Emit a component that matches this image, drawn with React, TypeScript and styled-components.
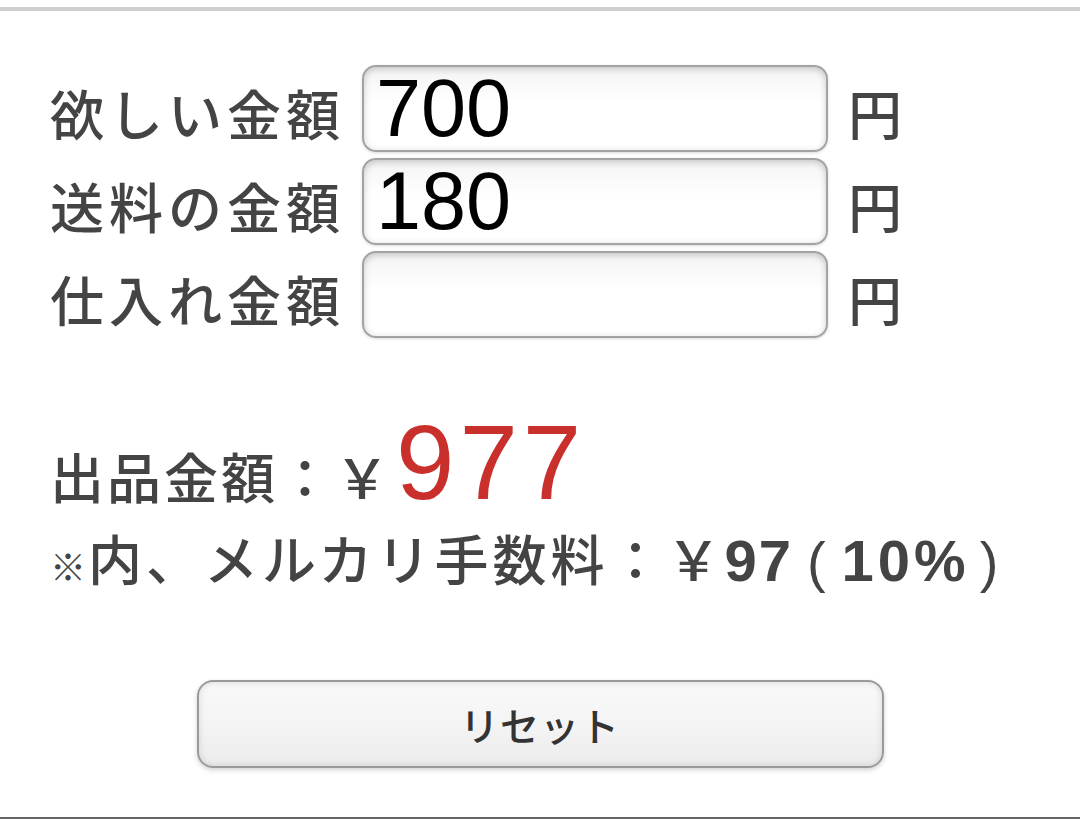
import React, { useState } from "react";
import styled, { createGlobalStyle } from "styled-components";

const Global = createGlobalStyle`
  html, body { margin: 0; padding: 0; background: #fff; }
  body { font-family: "Noto Sans CJK JP", "Liberation Sans", sans-serif; color: #444; }
`;

const Page = styled.div`
  width: 1080px;
  height: 819px;
  display: flex;
  flex-direction: column;
  overflow: hidden;
  box-sizing: border-box;
  border-bottom: 2px solid #666;
`;

const TopRule = styled.div`
  margin-top: 7px;
  height: 4px;
  background: #cfcfcf;
`;

const Form = styled.div`
  padding: 54px 0 0 50px;
  display: flex;
  flex-direction: column;
  gap: 6px;
`;

const Row = styled.div`
  display: flex;
  align-items: center;
  height: 87px;
`;

const Label = styled.label`
  width: 312px;
  font-size: 54px;
  font-weight: 500;
  letter-spacing: 5px;
  line-height: 1;
  padding-top: 9px;
  white-space: nowrap;
  color: #444;
`;

const Field = styled.input`
  box-sizing: border-box;
  width: 466px;
  height: 87px;
  border: 2px solid #a3a3a3;
  border-radius: 14px;
  background: linear-gradient(#f4f4f4, #fff 45%);
  box-shadow: inset 0 2px 7px rgba(0, 0, 0, 0.2), 0 1px 3px rgba(0, 0, 0, 0.15);
  padding: 0 12px;
  font-family: "Liberation Sans", Arial, sans-serif;
  font-size: 81px;
  color: #000;
  outline: none;
`;

const Unit = styled.span`
  margin-left: 20px;
  font-size: 54px;
  font-weight: 500;
  line-height: 1;
  padding-top: 8px;
  color: #444;
`;

const Result = styled.div`
  padding: 72px 0 0 50px;
  display: flex;
  flex-direction: column;
`;

const PriceLine = styled.div`
  display: flex;
  align-items: baseline;
  font-size: 54px;
  font-weight: 500;
  letter-spacing: 3px;
  line-height: 1;
  white-space: nowrap;
`;

const Big = styled.span`
  font-family: "Liberation Sans", Arial, sans-serif;
  font-weight: normal;
  font-size: 105px;
  letter-spacing: 5px;
  margin-left: 4px;
  color: #c9302c;
`;

const FeeLine = styled.div`
  display: flex;
  align-items: baseline;
  font-size: 54px;
  font-weight: 500;
  letter-spacing: 4px;
  line-height: 1;
  margin-top: 16px;
  white-space: nowrap;
`;

const Mark = styled.span`
  font-size: 36px;
  letter-spacing: 0;
  width: 38px;
`;

const Num = styled.span<{ $gap: number; $left: number }>`
  font-family: "Liberation Sans", Arial, sans-serif;
  font-weight: bold;
  font-size: 58px;
  letter-spacing: ${(p) => p.$gap}px;
  margin-left: ${(p) => p.$left}px;
`;

const Paren = styled.span<{ $before: number; $after: number }>`
  font-family: "Liberation Sans", Arial, sans-serif;
  font-weight: normal;
  font-size: 56px;
  letter-spacing: 0;
  margin: 0 ${(p) => p.$after}px 0 ${(p) => p.$before}px;
`;

const ButtonWrap = styled.div`
  display: flex;
  justify-content: center;
  padding-top: 90px;
`;

const ResetButton = styled.button`
  box-sizing: border-box;
  width: 687px;
  height: 88px;
  border: 2px solid #9a9a9a;
  border-radius: 16px;
  background: linear-gradient(#f9f9f9, #f4f4f4 50%, #ececec);
  box-shadow: inset 0 0 7px rgba(0, 0, 0, 0.13), 0 2px 5px rgba(0, 0, 0, 0.18);
  font-family: "Noto Sans CJK JP", sans-serif;
  font-size: 39px;
  font-weight: 500;
  letter-spacing: 1px;
  color: #333;
  cursor: pointer;
  padding: 0;
`;

export default function App() {
  const [want, setWant] = useState("700");
  const [ship, setShip] = useState("180");
  const [cost, setCost] = useState("");
  const rows = [
    { label: "欲しい金額", value: want, set: setWant },
    { label: "送料の金額", value: ship, set: setShip },
    { label: "仕入れ金額", value: cost, set: setCost },
  ];
  return (
    <>
      <Global />
      <Page>
        <TopRule />
        <Form>
          {rows.map((r) => (
            <Row key={r.label}>
              <Label>{r.label}</Label>
              <Field value={r.value} onChange={(e) => r.set(e.target.value)} />
              <Unit>円</Unit>
            </Row>
          ))}
        </Form>
        <Result>
          <PriceLine>
            <span>出品金額：￥</span>
            <Big>977</Big>
          </PriceLine>
          <FeeLine>
            <Mark>※</Mark>
            <span>内、メルカリ手数料：￥</span>
            <Num $gap={2} $left={0}>97</Num>
            <Paren $before={14} $after={16}>(</Paren>
            <Num $gap={4} $left={0}>10%</Num>
            <Paren $before={10} $after={0}>)</Paren>
          </FeeLine>
        </Result>
        <ButtonWrap>
          <ResetButton onClick={() => { setWant(""); setShip(""); setCost(""); }}>リセット</ResetButton>
        </ButtonWrap>
      </Page>
    </>
  );
}
